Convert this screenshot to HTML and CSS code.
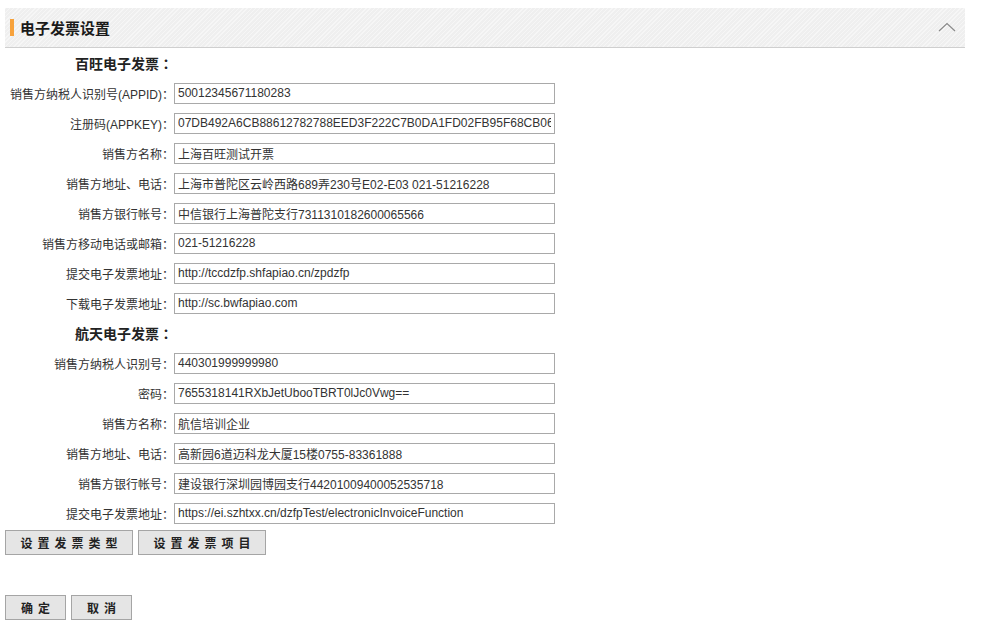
FILE: index.html
```html
<!DOCTYPE html>
<html lang="zh-CN">
<head>
<meta charset="utf-8">
<title>电子发票设置</title>
<link rel="stylesheet" href="styles.css">
</head>
<body>
<div class="page">
  <div class="panel-head">
    <span class="bar"></span>
    <span class="title">电子发票设置</span>
    <svg class="chev" width="18" height="10" viewBox="0 0 18 10"><polyline points="1,9 9,1.5 17,9" fill="none" stroke="#8a8a8a" stroke-width="1.2"/></svg>
  </div>
  <div class="form">
    <div class="section">百旺电子发票<span class="colon">：</span></div>
    <div class="row"><label class="lbl">销售方纳税人识别号(APPID)<span class="colon">：</span></label><input class="inp" value="50012345671180283"></div>
    <div class="row"><label class="lbl">注册码(APPKEY)<span class="colon">：</span></label><input class="inp" value="07DB492A6CB88612782788EED3F222C7B0DA1FD02FB95F68CB06"></div>
    <div class="row"><label class="lbl">销售方名称<span class="colon">：</span></label><input class="inp" value="上海百旺测试开票"></div>
    <div class="row"><label class="lbl">销售方地址、电话<span class="colon">：</span></label><input class="inp" value="上海市普陀区云岭西路689弄230号E02-E03 021-51216228"></div>
    <div class="row"><label class="lbl">销售方银行帐号<span class="colon">：</span></label><input class="inp" value="中信银行上海普陀支行7311310182600065566"></div>
    <div class="row"><label class="lbl">销售方移动电话或邮箱<span class="colon">：</span></label><input class="inp" value="021-51216228"></div>
    <div class="row"><label class="lbl">提交电子发票地址<span class="colon">：</span></label><input class="inp" value="http://tccdzfp.shfapiao.cn/zpdzfp"></div>
    <div class="row"><label class="lbl">下载电子发票地址<span class="colon">：</span></label><input class="inp" value="http://sc.bwfapiao.com"></div>
    <div class="section">航天电子发票<span class="colon">：</span></div>
    <div class="row"><label class="lbl">销售方纳税人识别号<span class="colon">：</span></label><input class="inp" value="440301999999980"></div>
    <div class="row"><label class="lbl">密码<span class="colon">：</span></label><input class="inp" value="7655318141RXbJetUbooTBRT0lJc0Vwg=="></div>
    <div class="row"><label class="lbl">销售方名称<span class="colon">：</span></label><input class="inp" value="航信培训企业"></div>
    <div class="row"><label class="lbl">销售方地址、电话<span class="colon">：</span></label><input class="inp" value="高新园6道迈科龙大厦15楼0755-83361888"></div>
    <div class="row"><label class="lbl">销售方银行帐号<span class="colon">：</span></label><input class="inp" value="建设银行深圳园博园支行44201009400052535718"></div>
    <div class="row"><label class="lbl">提交电子发票地址<span class="colon">：</span></label><input class="inp" value="https://ei.szhtxx.cn/dzfpTest/electronicInvoiceFunction"></div>
  </div>
  <div class="btns btns-top">
    <button class="btn btn-wide">设置发票类型</button>
    <button class="btn btn-wide">设置发票项目</button>
  </div>
  <div class="btns btns-bottom">
    <button class="btn btn-small">确定</button>
    <button class="btn btn-small">取消</button>
  </div>
</div>
</body>
</html>
```
FILE: styles.css
```css
html, body {
  margin: 0;
  padding: 0;
  background: #fff;
}
body {
  font-family: "Liberation Sans", Arial, "Noto Sans CJK SC", sans-serif;
  font-size: 12px;
  color: #333;
}
.page {
  padding: 8px 0 0 5px;
}
.panel-head {
  width: 960px;
  height: 40px;
  box-sizing: border-box;
  border-bottom: 1px solid #cfcfcf;
  background: repeating-linear-gradient(135deg, #f6f6f6 0 1px, #efefef 1px 3px);
  display: flex;
  align-items: center;
  padding-left: 5px;
}
.bar {
  width: 4px;
  height: 17px;
  background: #f7a23c;
  margin-right: 6px;
}
.title {
  font-family: "Noto Sans CJK SC", sans-serif;
  font-weight: bold;
  font-size: 15px;
  color: #1a1a1a;
  flex: 1;
}
.chev {
  margin-right: 9px;
  margin-top: -2px;
}
.colon {
  font-family: "Noto Sans CJK TC", sans-serif;
}
.form {
  display: flex;
  flex-direction: column;
}
.section {
  height: 30px;
  display: flex;
  align-items: center;
  padding-left: 70px;
  font-family: "Noto Sans CJK SC", sans-serif;
  font-weight: bold;
  font-size: 14px;
  color: #222;
}
.row {
  height: 30px;
  display: flex;
  align-items: center;
}
.lbl {
  width: 169px;
  text-align: right;
  font-family: "Liberation Sans", Arial, "Noto Sans CJK SC", sans-serif;
  color: #333;
  white-space: nowrap;
}
.inp {
  width: 381px;
  height: 21px;
  box-sizing: border-box;
  border: 1px solid #a9a9a9;
  padding: 0 3px;
  margin: 0;
  font-family: "Liberation Sans", Arial, "Noto Sans CJK SC", sans-serif;
  font-size: 12px;
  color: #333;
  background: #fff;
}
.btns {
  display: flex;
  gap: 5px;
}
.btns-top {
  margin-top: 2px;
}
.btns-bottom {
  margin-top: 40px;
}
.btn {
  height: 25px;
  box-sizing: border-box;
  border: 1px solid #a5a5a5;
  background: #e5e5e5;
  font-family: "Noto Sans CJK SC", sans-serif;
  font-weight: bold;
  font-size: 12px;
  color: #222;
  letter-spacing: 5px;
  padding: 0 0 0 5px;
  margin: 0;
}
.btn-wide {
  width: 128px;
}
.btn-small {
  width: 61px;
}
```
